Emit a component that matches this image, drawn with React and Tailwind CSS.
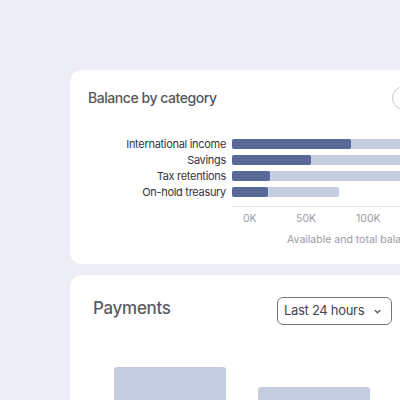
export default function App() {
  const rows = [
    { label: "International income", dark: 119, light: 200 },
    { label: "Savings", dark: 79, light: 200 },
    { label: "Tax retentions", dark: 38, light: 200 },
    { label: "On-hold treasury", dark: 36, light: 107 },
  ];
  return (
    <div className="w-[400px] h-[400px] overflow-hidden bg-[#ededf5] pl-[70px] pt-[70px]" style={{ fontFamily: "Inter, 'Noto Sans', sans-serif" }}>
      <div className="w-[400px] h-[194px] bg-white rounded-[12px] pl-[18px] pt-[15px]">
        <div className="flex items-center h-[24px]">
          <div className="w-[304px] text-[14px] font-medium tracking-[-0.45px] text-[#55555f]">Balance by category</div>
          <div className="mt-[2px] w-[24px] h-[24px] rounded-full border border-[#c9c9d1]"></div>
        </div>
        <div className="mt-[30px] flex flex-col gap-[6px]">
          {rows.map((r) => (
            <div key={r.label} className="flex items-center h-[10px]">
              <div className="w-[138px] text-right text-[11px] tracking-[-0.3px] text-[#34343c] leading-none whitespace-nowrap">{r.label}</div>
              <div className="ml-[6px] relative h-[10px]" style={{ width: r.light }}>
                <div className="absolute inset-0 bg-[#c5cee1] rounded-[2px]"></div>
                <div className="absolute left-0 top-0 h-full bg-[#58699a] rounded-[2px]" style={{ width: r.dark }}></div>
              </div>
            </div>
          ))}
        </div>
        <div className="ml-[144px] mt-[9px] h-px w-[300px] bg-[#e6e7ee]"></div>
        <div className="ml-[144px] mt-[4px] relative h-[14px] text-[10.5px] text-[#9a9aa4]">
          <span className="absolute left-[11px]">0K</span>
          <span className="absolute left-[64px]">50K</span>
          <span className="absolute left-[124px]">100K</span>
        </div>
        <div className="ml-[199px] mt-[7px] text-[10.5px] text-[#9a9aa4] whitespace-nowrap">Available and total balance</div>
      </div>
      <div className="mt-[11px] w-[400px] h-[200px] bg-white rounded-[12px] pl-[23px] pt-[21px]">
        <div className="flex items-start">
          <div className="w-[184px] text-[17px] font-medium tracking-[-0.3px] text-[#5b5b66] leading-[24px]">Payments</div>
          <div className="mt-[1px] w-[115px] h-[28px] rounded-[6px] border border-[#75757d] flex items-center pl-[6px] pr-[9px] justify-between">
            <span className="text-[13px] tracking-[-0.3px] text-[#44444c]">Last 24 hours</span>
            <svg width="9" height="9" viewBox="0 0 10 10" fill="none" stroke="#55555d" strokeWidth="1.5" strokeLinecap="round" strokeLinejoin="round"><path d="M2.5 3.8 L5 6.3 L7.5 3.8" /></svg>
          </div>
        </div>
        <div className="flex items-end gap-[32px] ml-[21px] mt-[42px]">
          <div className="w-[112px] h-[60px] bg-[#c5cee1] rounded-t-[3px] self-start"></div>
          <div className="w-[112px] h-[40px] bg-[#c5cee1] rounded-t-[3px] mt-[20px] self-start"></div>
        </div>
      </div>
    </div>
  );
}
